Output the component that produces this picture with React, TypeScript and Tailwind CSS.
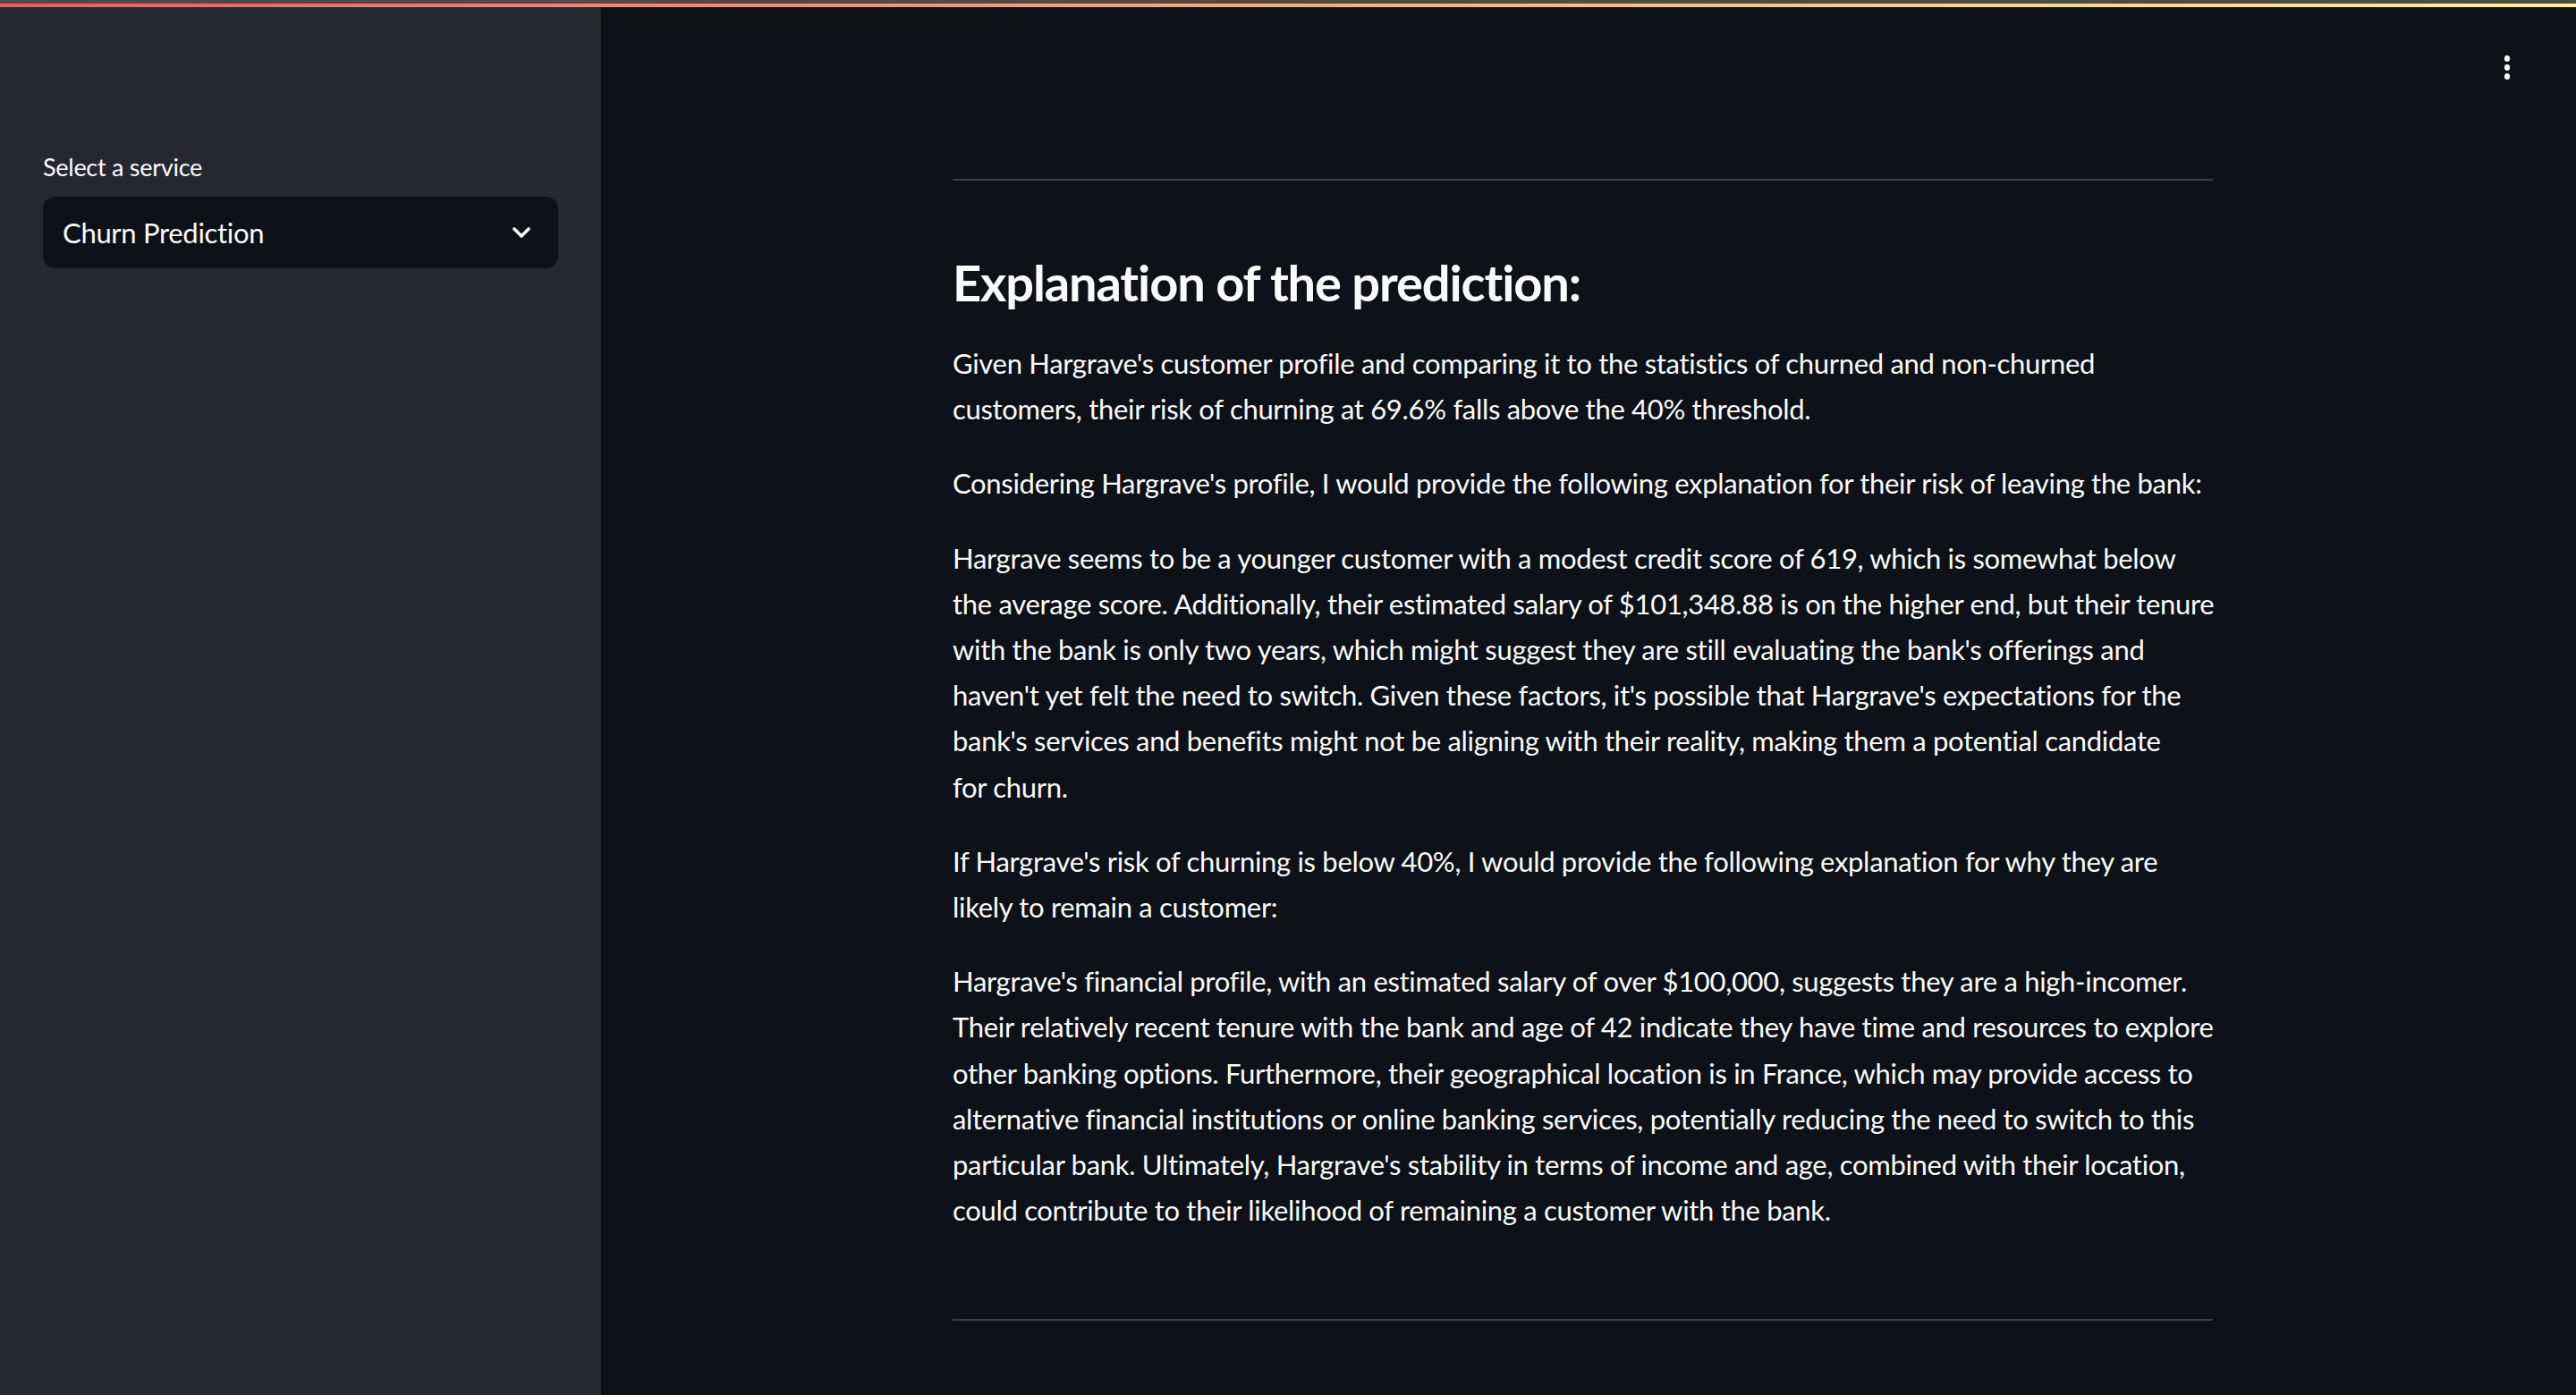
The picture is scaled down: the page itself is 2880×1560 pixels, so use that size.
const paragraphs: string[][] = [
  [
    "Given Hargrave's customer profile and comparing it to the statistics of churned and non-churned",
    "customers, their risk of churning at 69.6% falls above the 40% threshold.",
  ],
  [
    "Considering Hargrave's profile, I would provide the following explanation for their risk of leaving the bank:",
  ],
  [
    "Hargrave seems to be a younger customer with a modest credit score of 619, which is somewhat below",
    "the average score. Additionally, their estimated salary of $101,348.88 is on the higher end, but their tenure",
    "with the bank is only two years, which might suggest they are still evaluating the bank's offerings and",
    "haven't yet felt the need to switch. Given these factors, it's possible that Hargrave's expectations for the",
    "bank's services and benefits might not be aligning with their reality, making them a potential candidate",
    "for churn.",
  ],
  [
    "If Hargrave's risk of churning is below 40%, I would provide the following explanation for why they are",
    "likely to remain a customer:",
  ],
  [
    "Hargrave's financial profile, with an estimated salary of over $100,000, suggests they are a high-incomer.",
    "Their relatively recent tenure with the bank and age of 42 indicate they have time and resources to explore",
    "other banking options. Furthermore, their geographical location is in France, which may provide access to",
    "alternative financial institutions or online banking services, potentially reducing the need to switch to this",
    "particular bank. Ultimately, Hargrave's stability in terms of income and age, combined with their location,",
    "could contribute to their likelihood of remaining a customer with the bank.",
  ],
];

const Chevron = () => (
  <svg width="22" height="14" viewBox="0 0 22 14" fill="none">
    <path d="M3 3l8 8 8-8" stroke="#fafafa" strokeWidth="3.6" strokeLinecap="round" strokeLinejoin="round" />
  </svg>
);

const Kebab = () => (
  <div className="flex flex-col items-center gap-[3.5px]">
    <span className="block w-[6.5px] h-[6.5px] rounded-full bg-[#fafafa]" />
    <span className="block w-[6.5px] h-[6.5px] rounded-full bg-[#fafafa]" />
    <span className="block w-[6.5px] h-[6.5px] rounded-full bg-[#fafafa]" />
  </div>
);

export default function App() {
  return (
    <div className="flex flex-col h-[1560px] w-[2880px] overflow-hidden bg-[#0e1117] text-[#fafafa] font-['Lato',sans-serif]">
      <div className="h-[4px] bg-[#4a4a4c]" />
      <div className="h-[4px] bg-gradient-to-r from-[#f25a58] to-[#fff58a]" />
      <div className="flex flex-1">
        <aside className="w-[672px] shrink-0 bg-[#262730] px-[48px] pt-[158px]">
          <div className="text-[27px] leading-[42px] tracking-[-0.01em] mb-[12px]">Select a service</div>
          <div className="h-[80px] rounded-[14px] bg-[#0e1117] flex items-center justify-between pl-[22px] pr-[30px]">
            <span className="text-[31px] tracking-[-0.01em]">Churn Prediction</span>
            <Chevron />
          </div>
        </aside>
        <main className="relative flex-1 pl-[393px] pt-[192px]">
          <div className="absolute top-[54px] right-[74px]">
            <Kebab />
          </div>
          <div className="w-[1409px]">
            <hr className="border-0 h-[2px] bg-[#3d4045]" />
            <h3 className="mt-[80px] mb-[32px] text-[56px] leading-[67px] font-bold tracking-[-0.02em]">
              Explanation of the prediction:
            </h3>
            {paragraphs.map((lines, i) => (
              <p key={i} className="mb-[32px] text-[31px] leading-[51.2px] tracking-[-0.01em]">
                {lines.map((l, j) => (
                  <span key={j} className="block whitespace-nowrap">
                    {l}
                  </span>
                ))}
              </p>
            ))}
            <hr className="mt-[96px] border-0 h-[2px] bg-[#3d4045]" />
          </div>
        </main>
      </div>
    </div>
  );
}
